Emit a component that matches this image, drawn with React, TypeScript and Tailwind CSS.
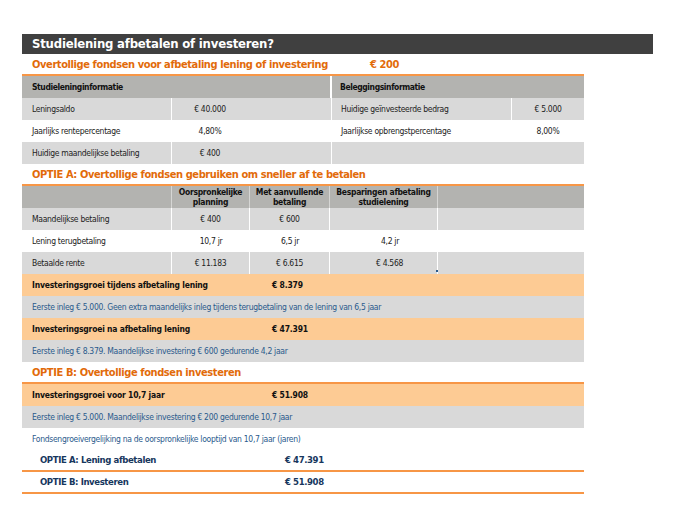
import React from "react";

const font = "font-['Liberation_Sans_Narrow','DejaVu_Sans_Condensed','Liberation_Sans',sans-serif]";

function SectionTitle({ children, right }: { children: React.ReactNode; right?: string }) {
  return (
    <div className="flex items-center h-[22px] border-b-2 border-[#f79646] pl-[10px] pt-[3px] text-[11px] font-bold tracking-[-0.4px] whitespace-nowrap text-[#e26b0a]">
      <span className="w-[338px] shrink-0">{children}</span>
      {right && <span>{right}</span>}
    </div>
  );
}

function InfoRow({ label, value, right, rightValue, gray }: { label: string; value: string; right?: string; rightValue?: string; gray?: boolean }) {
  const bg = gray ? "bg-[#d9d9d9]" : "bg-white";
  const sep = gray ? "border-r border-white" : "";
  return (
    <div className={`flex h-[22px] items-center text-[8.5px] tracking-[-0.3px] whitespace-nowrap text-[#222] ${bg}`}>
      <div className={`w-[150px] h-full flex items-center pl-[10px] ${sep}`}>{label}</div>
      <div className={`w-[160px] h-full flex items-center ${sep}`}>
        <span className="w-[76px] text-center">{value}</span>
      </div>
      {right !== undefined ? (
        <>
          <div className={`w-[180px] h-full flex items-center pl-[9px] ${sep}`}>{right}</div>
          <div className="w-[72px] h-full flex items-center justify-center">{rightValue}</div>
        </>
      ) : (
        <div className="w-[252px] h-full" />
      )}
    </div>
  );
}

function OptionRow({ label, a, b, c, gray }: { label: string; a: string; b: string; c: string; gray?: boolean }) {
  const sep = gray ? "border-r border-white" : "";
  return (
    <div className={`flex h-[22px] items-center text-[8.5px] tracking-[-0.3px] whitespace-nowrap text-[#222] ${gray ? "bg-[#d9d9d9]" : "bg-white"}`}>
      <div className={`w-[150px] h-full flex items-center pl-[10px] ${sep}`}>{label}</div>
      <div className={`w-[78px] h-full flex items-center justify-center ${sep}`}>{a}</div>
      <div className={`w-[80px] h-full flex items-center justify-center ${sep}`}>{b}</div>
      <div className={`w-[108px] h-full flex items-center justify-center pl-[12px] ${sep}`}>{c}</div>
      <div className="flex-1 h-full" />
    </div>
  );
}

function GrowthRow({ label, value }: { label: string; value: string }) {
  return (
    <div className="flex h-[22px] items-center bg-[#fdcb94] pl-[10px] text-[8.5px] font-bold tracking-[-0.2px] whitespace-nowrap text-[#111]">
      <span className="w-[240px]">{label}</span>
      <span>{value}</span>
    </div>
  );
}

function NoteRow({ children, gray = true }: { children: React.ReactNode; gray?: boolean }) {
  return (
    <div className={`flex h-[22px] items-center pl-[10px] text-[8.5px] tracking-[-0.3px] whitespace-nowrap text-[#2a5a8c] ${gray ? "bg-[#d9d9d9]" : "bg-white"}`}>
      {children}
    </div>
  );
}

function CompareRow({ label, value }: { label: string; value: string }) {
  return (
    <div className="flex h-[22px] items-center border-b-2 border-[#f79646] pl-[18px] text-[9.5px] font-bold tracking-[-0.4px] whitespace-nowrap text-[#17375e]">
      <span className="w-[245px]">{label}</span>
      <span>{value}</span>
    </div>
  );
}

export default function App() {
  return (
    <div className={`w-[675px] h-[520px] bg-white pt-[34px] pl-[22px] ${font}`}>
      <div className="w-[631px] h-[20px] bg-[#404040] flex items-center pl-[10px] text-[13px] font-bold tracking-[-0.2px] text-white">
        Studielening afbetalen of investeren?
      </div>

      <div className="w-[562px]">
        <SectionTitle right="€ 200">Overtollige fondsen voor afbetaling lening of investering</SectionTitle>

        <div className="flex h-[22px] items-center bg-[#b3b3b0] text-[8.5px] font-bold tracking-[-0.4px] text-[#111]">
          <div className="w-[310px] h-full flex items-center pl-[10px] border-r-2 border-white">Studieleninginformatie</div>
          <div className="flex-1 pl-[8px]">Beleggingsinformatie</div>
        </div>
        <InfoRow gray label="Leningsaldo" value="€ 40.000" right="Huidige geïnvesteerde bedrag" rightValue="€ 5.000" />
        <InfoRow label="Jaarlijks rentepercentage" value="4,80%" right="Jaarlijkse opbrengstpercentage" rightValue="8,00%" />
        <InfoRow gray label="Huidige maandelijkse betaling" value="€ 400" />

        <SectionTitle>OPTIE A: Overtollige fondsen gebruiken om sneller af te betalen</SectionTitle>

        <div className="flex h-[22px] bg-[#b3b3b0] text-[8.5px] font-bold tracking-[-0.3px] leading-[10px] whitespace-nowrap text-[#111]">
          <div className="w-[150px] h-full border-r border-[#d6d6d4]" />
          <div className="w-[78px] h-full flex items-center justify-center text-center border-r border-[#d6d6d4]">Oorspronkelijke<br />planning</div>
          <div className="w-[80px] h-full flex items-center justify-center text-center border-r border-[#d6d6d4]">Met aanvullende<br />betaling</div>
          <div className="w-[108px] h-full flex items-center justify-center text-center border-r border-[#d6d6d4]">Besparingen afbetaling<br />studielening</div>
          <div className="flex-1" />
        </div>
        <OptionRow gray label="Maandelijkse betaling" a="€ 400" b="€ 600" c="" />
        <OptionRow label="Lening terugbetaling" a="10,7 jr" b="6,5 jr" c="4,2 jr" />
        <div className="relative">
          <OptionRow gray label="Betaalde rente" a="€ 11.183" b="€ 6.615" c="€ 4.568" />
          <span className="absolute left-[414px] top-[18px] w-[2px] h-[2px] bg-[#2a5a8c]" />
        </div>

        <GrowthRow label="Investeringsgroei tijdens afbetaling lening" value="€ 8.379" />
        <NoteRow>Eerste inleg € 5.000. Geen extra maandelijks inleg tijdens terugbetaling van de lening van 6,5 jaar</NoteRow>
        <GrowthRow label="Investeringsgroei na afbetaling lening" value="€ 47.391" />
        <NoteRow>Eerste inleg € 8.379. Maandelijkse investering € 600 gedurende 4,2 jaar</NoteRow>

        <SectionTitle>OPTIE B: Overtollige fondsen investeren</SectionTitle>
        <GrowthRow label="Investeringsgroei voor 10,7 jaar" value="€ 51.908" />
        <NoteRow>Eerste inleg € 5.000. Maandelijkse investering € 200 gedurende 10,7 jaar</NoteRow>
        <NoteRow gray={false}>Fondsengroeivergelijking na de oorspronkelijke looptijd van 10,7 jaar (jaren)</NoteRow>

        <CompareRow label="OPTIE A: Lening afbetalen" value="€ 47.391" />
        <CompareRow label="OPTIE B: Investeren" value="€ 51.908" />
      </div>
    </div>
  );
}
